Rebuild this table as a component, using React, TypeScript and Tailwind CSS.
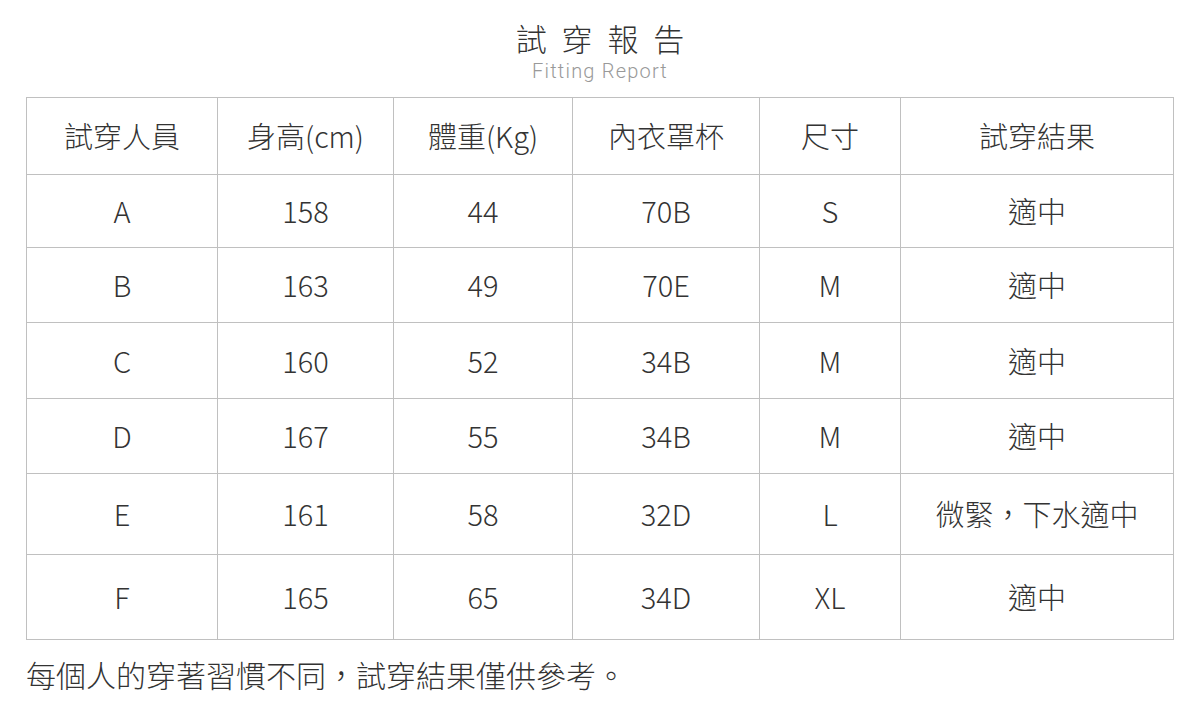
const headers = ["試穿人員", "身高(cm)", "體重(Kg)", "內衣罩杯", "尺寸", "試穿結果"];

const rows = [
  { h: "h-[73px]", cells: ["A", "158", "44", "70B", "S", "適中"] },
  { h: "h-[75px]", cells: ["B", "163", "49", "70E", "M", "適中"] },
  { h: "h-[76px]", cells: ["C", "160", "52", "34B", "M", "適中"] },
  { h: "h-[75px]", cells: ["D", "167", "55", "34B", "M", "適中"] },
  { h: "h-[81px]", cells: ["E", "161", "58", "32D", "L", "微緊，下水適中"] },
  { h: "h-[85px]", cells: ["F", "165", "65", "34D", "XL", "適中"] },
];

const widths = ["w-[191px]", "w-[176px]", "w-[179px]", "w-[187px]", "w-[141px]", "w-[273px]"];

export default function App() {
  return (
    <div
      className="w-[1200px] h-[720px] bg-white text-[#333]"
      style={{ fontFamily: '"Noto Sans CJK TC", "Noto Sans", sans-serif' }}
    >
      <div className="flex flex-col items-center pt-[18px]">
        <h1 className="text-[31px] leading-[40px] font-light tracking-[0.48em] pl-[0.48em] text-[#333]">
          試穿報告
        </h1>
        <p
          className="text-[20px] leading-[26px] tracking-[0.06em] font-light text-[#999]"
          style={{ fontFamily: 'Roboto, "Noto Sans", sans-serif' }}
        >
          Fitting Report
        </p>
      </div>

      <table className="ml-[26px] mt-[13px] border-collapse table-fixed font-light">
        <thead>
          <tr className="h-[77px]">
            {headers.map((t, i) => (
              <th
                key={i}
                className={`${widths[i]} border border-[#c0c0c0] text-[29px] font-light text-center align-middle p-0`}
              >
                {t}
              </th>
            ))}
          </tr>
        </thead>
        <tbody>
          {rows.map((r, ri) => (
            <tr key={ri} className={r.h}>
              {r.cells.map((c, ci) => (
                <td
                  key={ci}
                  className="border border-[#c0c0c0] text-[29px] text-center align-middle p-0"
                >
                  {c}
                </td>
              ))}
            </tr>
          ))}
        </tbody>
      </table>

      <p className="ml-[26px] mt-[14px] text-[30px] leading-[40px] font-light">
        每個人的穿著習慣不同，試穿結果僅供參考。
      </p>
    </div>
  );
}
